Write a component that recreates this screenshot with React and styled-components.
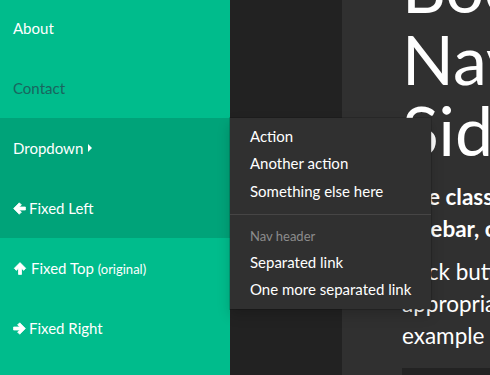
import React from 'react';
import styled, { createGlobalStyle } from 'styled-components';

const Global = createGlobalStyle`
  html, body { margin: 0; padding: 0; overflow: hidden; background: #222222; }
  body { font-family: Lato, "Open Sans", "Liberation Sans", sans-serif; color: #ffffff; }
  * { box-sizing: border-box; }
`;

const Page = styled.div`
  display: flex;
  width: 490px;
  height: 375px;
  overflow: hidden;
`;

const Sidebar = styled.nav`
  width: 230px;
  flex-shrink: 0;
  background: #00bc8c;
  position: relative;
  z-index: 2;
`;

const NavList = styled.ul`
  list-style: none;
  margin: -2px 0 0;
  padding: 0;
`;

const NavItem = styled.li`
  position: relative;
  background: ${p => (p.$active ? '#00a379' : 'transparent')};
`;

const NavLink = styled.a`
  display: flex;
  align-items: center;
  height: 60px;
  padding: 0 13px;
  font-size: 15px;
  color: ${p => (p.$muted ? '#1a665f' : '#ffffff')};
  text-decoration: none;
  white-space: nowrap;
`;

const IconSvg = styled.svg`
  width: ${p => p.$w}px;
  height: 13px;
  margin-right: ${p => p.$gap}px;
  flex-shrink: 0;
  fill: #ffffff;
  stroke: #ffffff;
  stroke-width: 0.8;
  stroke-linejoin: round;
`;

const ArrowLeft = () => (
  <IconSvg viewBox="0 0 13 13" $w={13} $gap={3}>
    <path d="M0.6 6.5 L6.3 0.8 L8.4 2.9 L6.1 5 H12.4 V8 H6.1 L8.4 10.1 L6.3 12.2 Z" />
  </IconSvg>
);

const ArrowUp = () => (
  <IconSvg viewBox="0 0 13 13" $w={14} $gap={4}>
    <path d="M6.5 0.6 L12.2 6.3 L10.1 8.4 L8 6.1 V12.4 H5 V6.1 L2.9 8.4 L0.8 6.3 Z" />
  </IconSvg>
);

const ArrowRight = () => (
  <IconSvg viewBox="0 0 13 13" $w={13} $gap={3}>
    <path d="M12.4 6.5 L6.7 0.8 L4.6 2.9 L6.9 5 H0.6 V8 H6.9 L4.6 10.1 L6.7 12.2 Z" />
  </IconSvg>
);

const Small = styled.small`
  font-size: 13px;
`;

const Caret = styled.span`
  width: 0;
  height: 0;
  margin-left: 5px;
  border-left: 4px solid #ffffff;
  border-top: 4px solid transparent;
  border-bottom: 4px solid transparent;
`;

const Menu = styled.ul`
  position: absolute;
  left: 100%;
  top: 0;
  list-style: none;
  margin: 0;
  padding: 5px 0;
  background: #303030;
  box-shadow: 0 0 0 1px rgba(0, 0, 0, 0.15), 0 6px 12px rgba(0, 0, 0, 0.175);
  z-index: 10;
  white-space: nowrap;
`;

const MenuLink = styled.a`
  display: block;
  padding: 3px 20px;
  font-size: 15px;
  line-height: 21.43px;
  color: #ffffff;
  text-decoration: none;
`;

const MenuDivider = styled.li`
  height: 1px;
  margin: 9px 0;
  background: #464545;
`;

const MenuHeader = styled.li`
  padding: 3px 20px;
  font-size: 13px;
  line-height: 18.57px;
  color: #8c8c8c;
`;

const Main = styled.main`
  flex: 1;
  background: #222222;
  padding-left: 112px;
  overflow: hidden;
`;

const Jumbotron = styled.section`
  display: flow-root;
  width: 560px;
  height: 100%;
  background: #303030;
  padding: 0 60px;
  white-space: nowrap;
`;

const Title = styled.h1`
  margin: -49px 0 0;
  font-size: 68px;
  line-height: 71.5px;
  font-weight: 400;
`;

const Paragraph = styled.p`
  margin: ${p => p.$top}px 0 0;
  font-size: 22.5px;
  line-height: 32px;
  font-weight: ${p => (p.$bold ? 700 : 400)};
`;

const Button = styled.a`
  display: block;
  margin-top: 16px;
  width: 220px;
  height: 46px;
  background: #232323;
`;

export default function App() {
  return (
    <>
      <Global />
      <Page>
        <Sidebar>
          <NavList>
            <NavItem>
              <NavLink href="#">About</NavLink>
            </NavItem>
            <NavItem>
              <NavLink href="#" $muted>Contact</NavLink>
            </NavItem>
            <NavItem $active>
              <NavLink href="#">
                Dropdown<Caret />
              </NavLink>
              <Menu>
                <li><MenuLink href="#">Action</MenuLink></li>
                <li><MenuLink href="#">Another action</MenuLink></li>
                <li><MenuLink href="#">Something else here</MenuLink></li>
                <MenuDivider />
                <MenuHeader>Nav header</MenuHeader>
                <li><MenuLink href="#">Separated link</MenuLink></li>
                <li><MenuLink href="#">One more separated link</MenuLink></li>
              </Menu>
            </NavItem>
            <NavItem $active>
              <NavLink href="#">
                <ArrowLeft />
                <span>Fixed Left</span>
              </NavLink>
            </NavItem>
            <NavItem>
              <NavLink href="#">
                <ArrowUp />
                <span>Fixed Top <Small>(original)</Small></span>
              </NavLink>
            </NavItem>
            <NavItem>
              <NavLink href="#">
                <ArrowRight />
                <span>Fixed Right</span>
              </NavLink>
            </NavItem>
          </NavList>
        </Sidebar>
        <Main>
          <Jumbotron>
            <Title>
              Bootstrap<br />Navbar<br />Sidebar
            </Title>
            <Paragraph $bold $top={15}>
              The classes navbar-fixed-left<br />sidebar, or navbar-fixed-right
            </Paragraph>
            <Paragraph $top={11}>
              Click buttons below to see<br />appropriate navbar<br />example
            </Paragraph>
            <Button href="#" />
          </Jumbotron>
        </Main>
      </Page>
    </>
  );
}
